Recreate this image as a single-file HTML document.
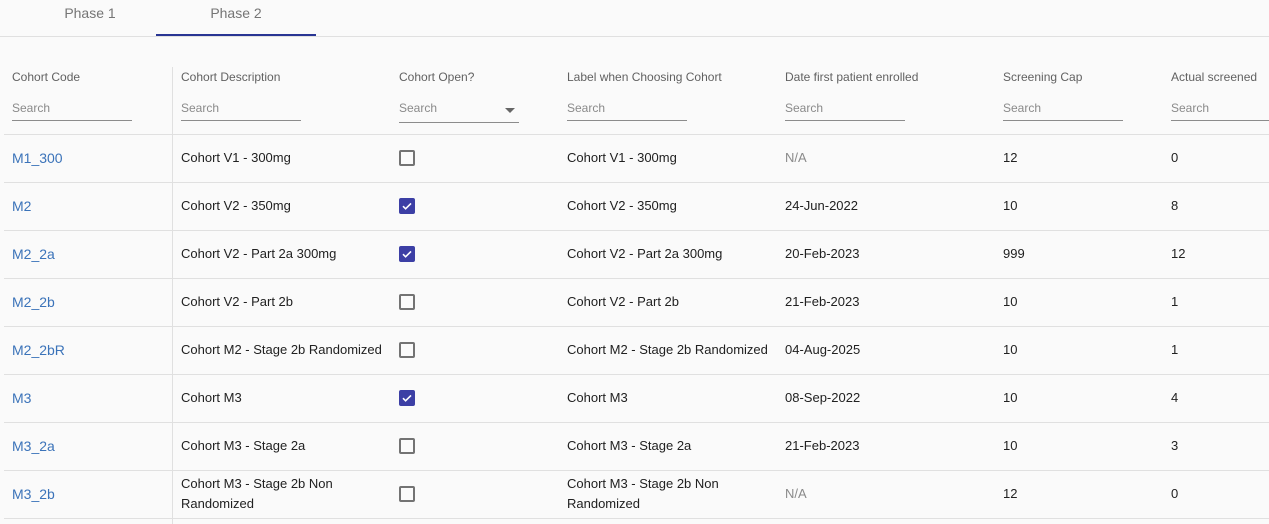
<!DOCTYPE html>
<html><head><meta charset="utf-8"><style>
*{margin:0;padding:0;box-sizing:border-box}
body{width:1269px;height:524px;background:#fafafa;font-family:"Liberation Sans",Arial,sans-serif;position:relative;overflow:hidden;color:#212121}
.a{position:absolute;white-space:nowrap}
.tab{top:5px;font-size:14px;color:#757575;width:160px;text-align:center}
.hdr{top:70px;font-size:12px;color:#616161}
.srch{top:101px;font-size:12px;color:#8a8a8a;height:20px;border-bottom:1px solid #8c8c8c;width:120px}
.line{position:absolute;left:4px;right:0;height:1px;background:#e0e0e0}
.cell{position:absolute;font-size:13px;line-height:20px}
.code{font-size:14px;color:#3b73b9}
.cb{position:absolute;left:399px;width:16px;height:16px;border:2px solid #737373;border-radius:2px}
.cb.on{background:#3c3fa5;border-color:#3c3fa5}
</style></head><body>
<div class="a tab" style="left:10px">Phase 1</div>
<div class="a tab" style="left:156px">Phase 2</div>
<div style="position:absolute;left:0;right:0;top:36px;height:1px;background:#e0e0e0"></div>
<div style="position:absolute;left:156px;width:160px;top:34px;height:2px;background:#283593"></div>
<div style="position:absolute;left:172px;top:67px;width:1px;bottom:0;background:#e0e0e0"></div>

<div class="a hdr" style="left:12px">Cohort Code</div>
<div class="a hdr" style="left:181px">Cohort Description</div>
<div class="a hdr" style="left:399px">Cohort Open?</div>
<div class="a hdr" style="left:567px">Label when Choosing Cohort</div>
<div class="a hdr" style="left:785px">Date first patient enrolled</div>
<div class="a hdr" style="left:1003px">Screening Cap</div>
<div class="a hdr" style="left:1171px">Actual screened</div>

<div class="a srch" style="left:12px">Search</div>
<div class="a srch" style="left:181px">Search</div>
<div class="a srch" style="left:399px;top:101px;height:22px">Search<span style="position:absolute;right:4px;top:7px;width:0;height:0;border-left:5px solid transparent;border-right:5px solid transparent;border-top:5px solid #666"></span></div>
<div class="a srch" style="left:567px">Search</div>
<div class="a srch" style="left:785px">Search</div>
<div class="a srch" style="left:1003px">Search</div>
<div class="a srch" style="left:1171px;width:100px">Search</div>

<div id="rows"></div>
<script>
var d=[["M1_300","Cohort V1 - 300mg",0,"Cohort V1 - 300mg","N/A","12","0"],
["M2","Cohort V2 - 350mg",1,"Cohort V2 - 350mg","24-Jun-2022","10","8"],
["M2_2a","Cohort V2 - Part 2a 300mg",1,"Cohort V2 - Part 2a 300mg","20-Feb-2023","999","12"],
["M2_2b","Cohort V2 - Part 2b",0,"Cohort V2 - Part 2b","21-Feb-2023","10","1"],
["M2_2bR","Cohort M2 - Stage 2b Randomized",0,"Cohort M2 - Stage 2b Randomized","04-Aug-2025","10","1"],
["M3","Cohort M3",1,"Cohort M3","08-Sep-2022","10","4"],
["M3_2a","Cohort M3 - Stage 2a",0,"Cohort M3 - Stage 2a","21-Feb-2023","10","3"],
["M3_2b","Cohort M3 - Stage 2b Non<br>Randomized",0,"Cohort M3 - Stage 2b Non<br>Randomized","N/A","12","0"]];
var h='';
for(var i=0;i<d.length;i++){var t=134+48*i,r=d[i],c=t+24;
h+='<div class="line" style="top:'+t+'px"></div>';
function cell(x,s,cls,st){var two=s.indexOf('<br>')>=0;return '<div class="cell '+(cls||'')+'" style="left:'+x+'px;top:'+(two?c-20:c-10)+'px;'+(st||'')+'">'+s+'</div>';}
h+=cell(12,r[0],'code');h+=cell(181,r[1]);
h+='<div class="cb'+(r[2]?' on':'')+'" style="top:'+(c-8)+'px">'+(r[2]?'<svg width="12" height="12" viewBox="0 0 12 12" style="position:absolute;left:0;top:0"><path d="M2 6.2l2.6 2.6L10 3.4" stroke="#fff" stroke-width="1.6" fill="none"/></svg>':'')+'</div>';
h+=cell(567,r[3]);h+=cell(785,r[4],'',r[4]=='N/A'?'color:#8a8a8a':'');h+=cell(1003,r[5]);h+=cell(1171,r[6]);}
h+='<div class="line" style="top:'+(134+48*8)+'px"></div>';
document.getElementById('rows').innerHTML=h;
</script>
</body></html>
